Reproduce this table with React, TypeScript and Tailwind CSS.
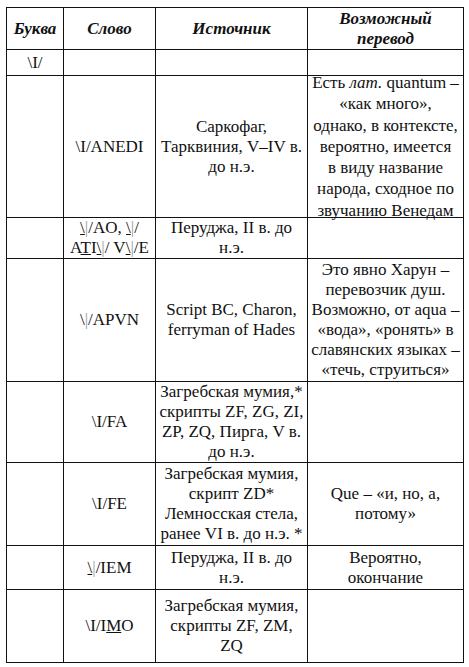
import React from "react";

const G = () => <span className="text-[#9a9a9a]">|</span>;

const Psi = () => <>\I/</>;

type Row = {
  h: string;
  a?: React.ReactNode;
  b?: React.ReactNode;
  c?: React.ReactNode;
  d?: React.ReactNode;
};

const rows: Row[] = [
  { h: "h-[26px]", a: <Psi /> },
  {
    h: "h-[142px]",
    b: (
      <>
        <Psi />
        ANEDI
      </>
    ),
    c: (
      <>
        Саркофаг,
        <br />
        Тарквиния, V–IV в.
        <br />
        до н.э.
      </>
    ),
    d: (
      <div className="leading-[21.3px] -my-[5px]">
        Есть <i>лат.</i> quantum –<br />
        «как много»,
        <br />
        однако, в контексте,
        <br />
        вероятно, имеется
        <br />в виду название
        <br />
        народа, сходное по
        <br />
        звучанию Венедам
      </div>
    ),
  },
  {
    h: "h-[41px]",
    b: (
      <>
        <span className="underline">
          \<G />
        </span>
        /AO,{" "}
        <span className="underline">
          \<G />
        </span>
        /
        <br />A<span className="underline">T</span>I
        <span className="underline">
          \<G />
        </span>
        / V
        <span className="underline">
          \<G />
        </span>
        /E
      </>
    ),
    c: (
      <>
        Перуджа, II в. до
        <br />
        н.э.
      </>
    ),
  },
  {
    h: "h-[123px]",
    b: (
      <>
        \<G />
        /APVN
      </>
    ),
    c: (
      <>
        Script BC, Charon,
        <br />
        ferryman of Hades
      </>
    ),
    d: (
      <>
        Это явно Харун –<br />
        перевозчик душ.
        <br />
        Возможно, от aqua –<br />
        «вода», «ронять» в<br />
        славянских языках –<br />
        «течь, струиться»
      </>
    ),
  },
  {
    h: "h-[81px]",
    b: (
      <>
        <Psi />
        FA
      </>
    ),
    c: (
      <>
        Загребская мумия,*
        <br />
        скрипты ZF, ZG, ZI,
        <br />
        ZP, ZQ, Пирга, V в.
        <br />
        до н.э.
      </>
    ),
  },
  {
    h: "h-[83px]",
    b: (
      <>
        <Psi />
        FE
      </>
    ),
    c: (
      <>
        Загребская мумия,
        <br />
        скрипт ZD*
        <br />
        Лемносская стела,
        <br />
        ранее VI в. до н.э. *
      </>
    ),
    d: (
      <>
        Que – «и, но, а,
        <br />
        потому»
      </>
    ),
  },
  {
    h: "h-[44px]",
    b: (
      <>
        <span className="underline">
          \<G />
        </span>
        /IEM
      </>
    ),
    c: (
      <>
        Перуджа, II в. до
        <br />
        н.э.
      </>
    ),
    d: (
      <>
        Вероятно,
        <br />
        окончание
      </>
    ),
  },
  {
    h: "h-[73px]",
    b: (
      <>
        <Psi />I<span className="underline">M</span>O
      </>
    ),
    c: (
      <>
        Загребская мумия,
        <br />
        скрипты ZF, ZM,
        <br />
        ZQ
      </>
    ),
  },
];

const td =
  "border border-[#111] px-[3px] py-0 text-center align-middle whitespace-nowrap font-['Liberation_Serif','Times_New_Roman',serif]";

export default function App() {
  return (
    <div className="bg-white w-[469px] h-[667px] pt-[7px] pl-[6px] text-[#111] text-[17px] leading-[20px] font-['Liberation_Serif','Times_New_Roman',serif]">
      <table className="border-collapse table-fixed w-[457px]">
        <colgroup>
          <col className="w-[57px]" />
          <col className="w-[92px]" />
          <col className="w-[152px]" />
          <col className="w-[156px]" />
        </colgroup>
        <thead>
          <tr className="h-[42px]">
            <th className={td + " font-bold italic"}>Буква</th>
            <th className={td + " font-bold italic"}>Слово</th>
            <th className={td + " font-bold italic"}>Источник</th>
            <th className={td + " font-bold italic"}>
              Возможный
              <br />
              перевод
            </th>
          </tr>
        </thead>
        <tbody>
          {rows.map((r, i) => (
            <tr key={i} className={r.h}>
              <td className={td}>{r.a}</td>
              <td className={td}>{r.b}</td>
              <td className={td}>{r.c}</td>
              <td className={td}>{r.d}</td>
            </tr>
          ))}
        </tbody>
      </table>
    </div>
  );
}
